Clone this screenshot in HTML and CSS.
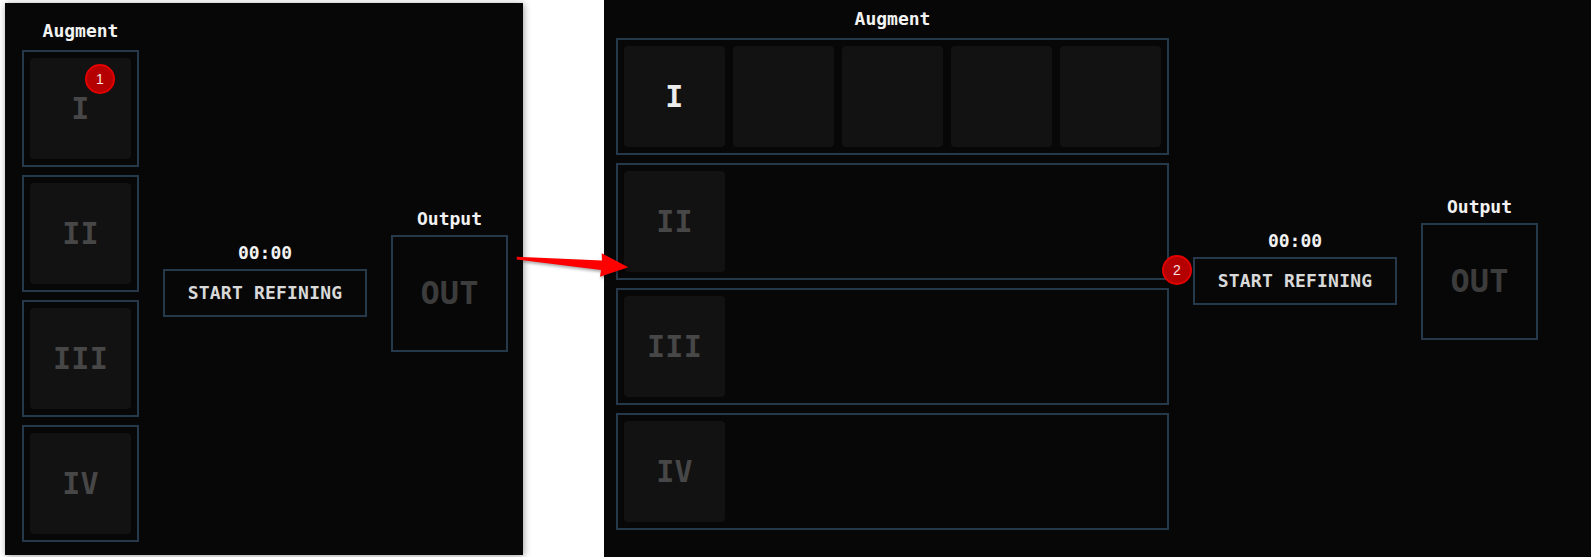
FILE: index.html
```html
<!DOCTYPE html>
<html lang="en">
<head>
<meta charset="utf-8">
<title>Augment refining</title>
<link rel="stylesheet" href="styles.css">
</head>
<body>
<div class="stage">
  <section class="panel panel-old">
    <div class="aug-col">
      <div class="label">Augment</div>
      <div class="slots">
        <div class="slot"><div class="tile">I<span class="badge badge-1">1</span></div></div>
        <div class="slot"><div class="tile">II</div></div>
        <div class="slot"><div class="tile">III</div></div>
        <div class="slot"><div class="tile">IV</div></div>
      </div>
    </div>
    <div class="mid">
      <div class="timer">00:00</div>
      <div class="refine-wrap"><button class="refine">START REFINING</button></div>
    </div>
    <div class="out-col">
      <div class="label">Output</div>
      <div class="out-box">OUT</div>
    </div>
  </section>

  <section class="panel panel-new">
    <div class="aug-col aug-wide">
      <div class="label">Augment</div>
      <div class="slots">
        <div class="row">
          <div class="tile active">I</div>
          <div class="tile"></div>
          <div class="tile"></div>
          <div class="tile"></div>
          <div class="tile"></div>
        </div>
        <div class="row"><div class="tile">II</div></div>
        <div class="row"><div class="tile">III</div></div>
        <div class="row"><div class="tile">IV</div></div>
      </div>
    </div>
    <div class="mid">
      <div class="timer">00:00</div>
      <div class="refine-wrap">
        <span class="badge badge-2">2</span>
        <button class="refine">START REFINING</button>
      </div>
    </div>
    <div class="out-col">
      <div class="label">Output</div>
      <div class="out-box">OUT</div>
    </div>
  </section>

  <svg class="arrow" width="140" height="50" viewBox="0 0 140 50" aria-hidden="true">
    <polygon points="16.7,16.7 102,20.5 101.7,13.3 128.3,27.3 100,36.7 101,30 16.7,19.4" fill="#ff0000"/>
  </svg>
</div>
</body>
</html>
```

FILE: styles.css
```css
html, body {
  margin: 0;
  padding: 0;
  background: #ffffff;
}

body {
  width: 1591px;
  height: 557px;
  overflow: hidden;
}

.stage {
  position: relative;
  display: flex;
  align-items: flex-start;
  gap: 81px;
  padding-left: 5px;
  height: 557px;
  box-sizing: border-box;
}

.panel {
  background: #070707;
  display: flex;
  align-items: center;
  gap: 24px;
  box-sizing: border-box;
  flex-shrink: 0;
}

.panel-old {
  margin-top: 3px;
  width: 518px;
  height: 552px;
  padding: 18px 15px 13px 17px;
  box-shadow: 1px 1px 7px rgba(0, 0, 0, 0.38);
}

.panel-new {
  width: 987px;
  height: 557px;
  padding: 9px 0 27px 12px;
}

.label,
.timer,
.refine,
.out-box,
.tile {
  font-family: "DejaVu Sans Mono", "Liberation Mono", monospace;
  font-weight: bold;
}

.label {
  font-size: 18px;
  line-height: 20px;
  color: #f2f2f2;
  text-align: center;
  margin-bottom: 9px;
}

.aug-col {
  width: 117px;
  display: flex;
  flex-direction: column;
}

.aug-wide {
  width: 553px;
}

.slots {
  display: flex;
  flex-direction: column;
  gap: 8px;
}

.slot,
.row {
  border: 2px solid #26394a;
  padding: 6px;
  display: flex;
  gap: 8px;
}

.tile {
  position: relative;
  width: 101px;
  height: 101px;
  flex-shrink: 0;
  background: #121212;
  border-radius: 4px;
  display: flex;
  align-items: center;
  justify-content: center;
  font-size: 30px;
  letter-spacing: 0.3px;
  color: #474747;
}

.tile.active {
  color: #ececec;
}

.mid {
  display: flex;
  flex-direction: column;
  align-items: center;
  margin-bottom: 4px;
}

.timer {
  font-size: 18px;
  line-height: 20px;
  color: #f2f2f2;
  margin-bottom: 6px;
}

.refine-wrap {
  position: relative;
}

.refine {
  display: block;
  width: 204px;
  height: 48px;
  margin: 0;
  padding: 0;
  border: 2px solid #26394a;
  background: transparent;
  color: #d9d9d9;
  font-size: 18px;
  letter-spacing: 0.2px;
}

.out-col {
  display: flex;
  flex-direction: column;
  width: 117px;
  margin-bottom: 3px;
}

.out-col .label {
  margin-bottom: 6px;
}

.out-box {
  box-sizing: border-box;
  width: 117px;
  height: 117px;
  border: 2px solid #26394a;
  display: flex;
  align-items: center;
  justify-content: center;
  font-size: 32px;
  color: #3c3c3c;
}

.badge {
  position: absolute;
  box-sizing: border-box;
  width: 30px;
  height: 30px;
  border-radius: 50%;
  background: #b40000;
  border: 2px solid #e40000;
  color: #f6e4e4;
  font-family: "Liberation Sans", Arial, sans-serif;
  font-weight: normal;
  font-size: 14px;
  letter-spacing: 0;
  line-height: 26px;
  text-align: center;
}

.badge-1 {
  left: 55px;
  top: 6px;
}

.badge-2 {
  left: -31px;
  top: -2px;
  z-index: 2;
}

.arrow {
  position: absolute;
  left: 500px;
  top: 240px;
  filter: drop-shadow(1px 2px 1.5px rgba(0, 0, 0, 0.35));
}
```
